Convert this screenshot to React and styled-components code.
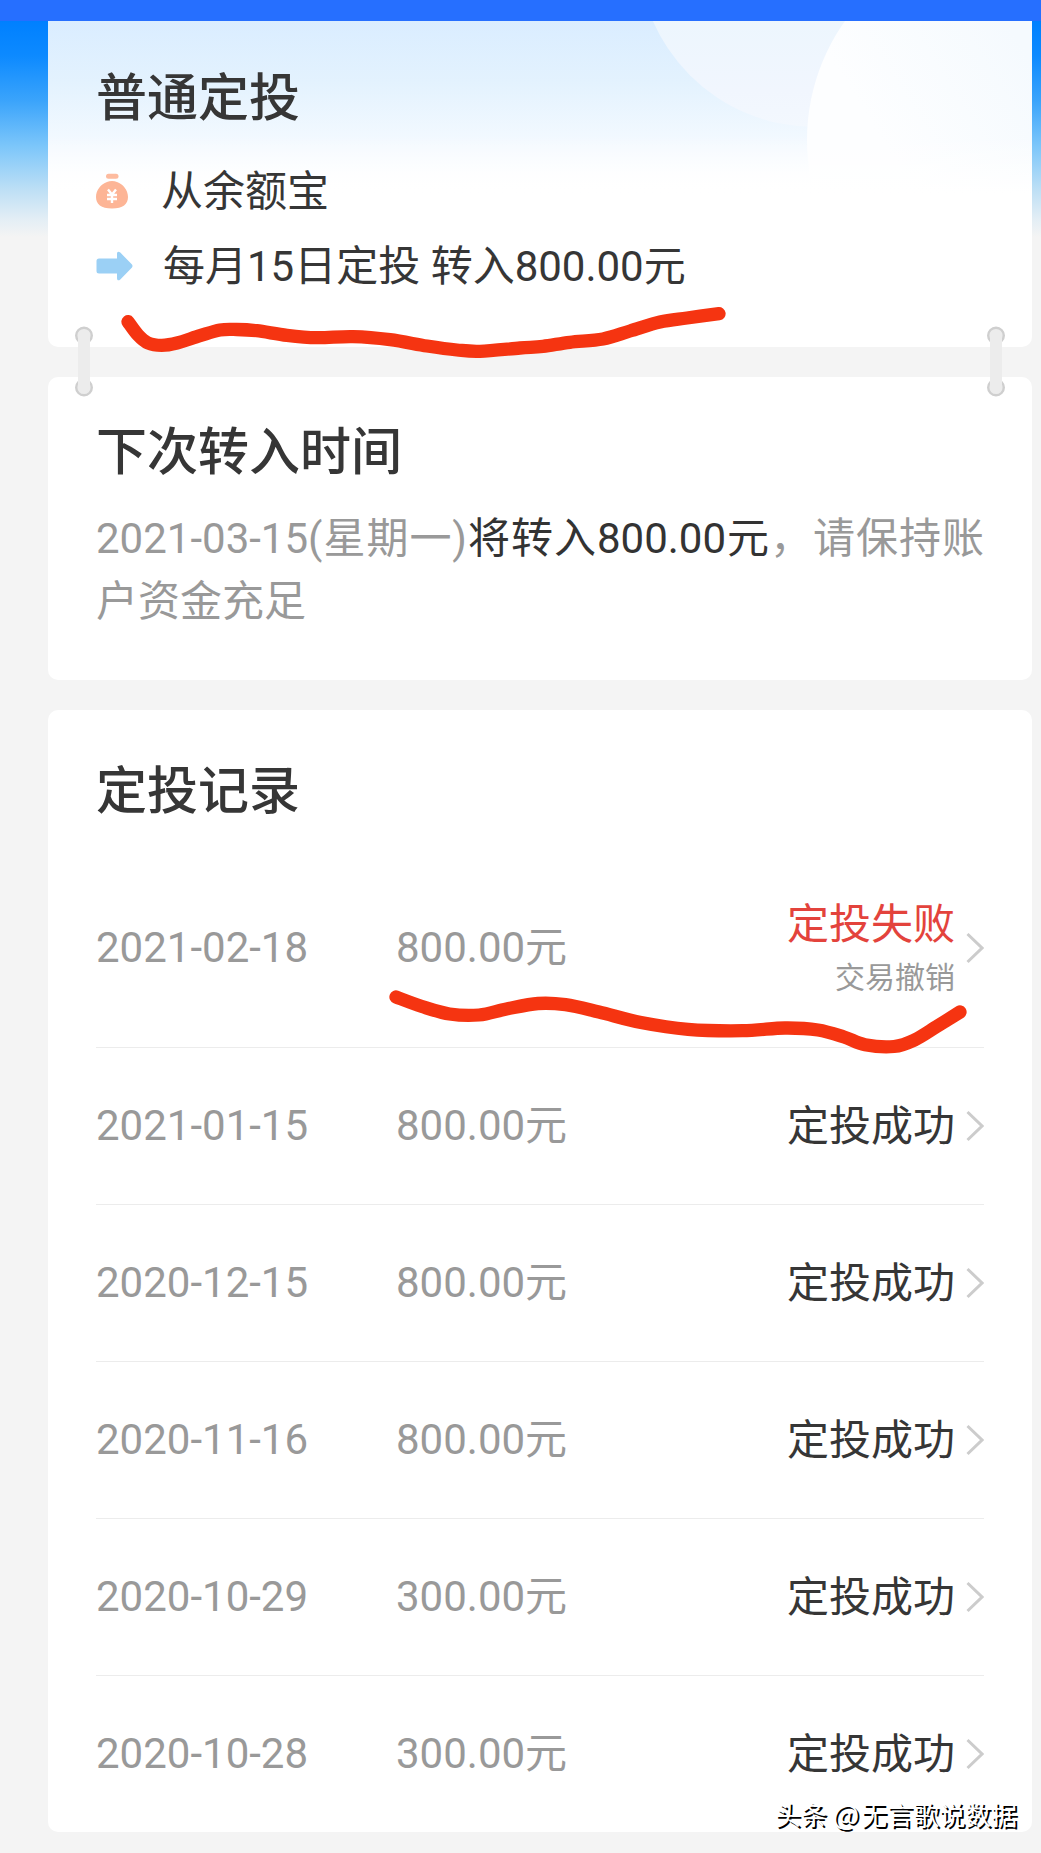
import React from "react";
import styled, { createGlobalStyle } from "styled-components";

const GlobalStyle = createGlobalStyle`
  * { box-sizing: border-box; }
  body {
    margin: 0;
    background: #f4f4f4;
    font-family: Roboto, "Noto Sans CJK SC", sans-serif;
    color: #363636;
  }
`;

const Page = styled.main`
  position: relative;
  width: 1041px;
  height: 1853px;
  overflow: hidden;
  background: #f4f4f4;
`;

const TopBar = styled.header`
  height: 21px;
  background: #266fff;
`;

const Content = styled.div`
  display: flex;
  flex-direction: column;
  gap: 30px;
  padding: 0 9px 0 48px;
  background: linear-gradient(
      180deg,
      #0080ff 0,
      #0d8aff 35px,
      #3ba4fb 80px,
      #7cc6fa 125px,
      #bfe0f5 170px,
      #e3eef5 198px,
      #f4f4f4 216px
    )
    no-repeat;
`;

const Card = styled.section`
  position: relative;
  height: ${(p) => p.$height}px;
  padding: ${(p) => p.$top}px 48px 0;
  border-radius: ${(p) => (p.$flatTop ? "0 0 10px 10px" : "10px")};
  background: #ffffff;
`;

const Backdrop = styled.svg`
  position: absolute;
  left: 0;
  top: 0;
`;

const Title = styled.h2`
  position: relative;
  margin: 0;
  font-size: 51px;
  line-height: 60px;
  font-weight: 500;
`;

const InfoRow = styled.div`
  position: relative;
  display: flex;
  align-items: center;
  height: 60px;
  margin-top: ${(p) => p.$gap}px;
  font-size: 42px;
  line-height: 58px;
  white-space: pre;

  svg {
    flex: none;
    margin-right: ${(p) => p.$space}px;
  }

  span {
    padding-top: 2px;
  }
`;

const Notice = styled.p`
  margin: 24px 0 0;
  font-size: 42px;
  line-height: 63px;
  text-align: justify;
  color: #999999;

  b {
    font-weight: 400;
    color: #333333;
  }
`;

const Links = styled.svg`
  position: absolute;
  left: 0;
  top: 300px;
`;

const Records = styled.ul`
  margin: 26px 0 0;
  padding: 0;
  list-style: none;
`;

const Record = styled.li`
  display: grid;
  grid-template-columns: 300px 1fr auto 18px;
  column-gap: 0;
  align-items: center;
  height: ${(p) => (p.$tall ? 200 : 157)}px;
  border-bottom: 1px solid #ececec;
  font-size: 42px;
  line-height: 56px;
  color: #999999;

  &:last-child {
    border-bottom-color: transparent;
  }

  > svg {
    display: block;
  }
`;

const Status = styled.div`
  display: flex;
  flex-direction: column;
  align-items: flex-end;
  margin-right: 11px;
  padding-top: 2px;
  color: ${(p) => (p.$failed ? "#e3433c" : "#363636")};
`;

const Reason = styled.small`
  font-size: 30px;
  line-height: 44px;
  margin-top: 3px;
  color: #999999;
`;

const Marks = styled.svg`
  position: absolute;
  left: 0;
  top: 0;
  pointer-events: none;
`;

const Watermark = styled.div`
  position: absolute;
  right: 24px;
  bottom: 20px;
  font-family: "Noto Sans CJK SC", sans-serif;
  font-size: 26px;
  line-height: 38px;
  color: #ffffff;
  text-shadow: 2px 2px 0 #000000;
  white-space: nowrap;
`;

const AtSign = styled.span`
  font-size: 28px;
  line-height: 1;
  letter-spacing: 2px;
`;

const records = [
  { date: "2021-02-18", amount: "800.00元", status: "定投失败", reason: "交易撤销" },
  { date: "2021-01-15", amount: "800.00元", status: "定投成功" },
  { date: "2020-12-15", amount: "800.00元", status: "定投成功" },
  { date: "2020-11-16", amount: "800.00元", status: "定投成功" },
  { date: "2020-10-29", amount: "300.00元", status: "定投成功" },
  { date: "2020-10-28", amount: "300.00元", status: "定投成功" },
];

const strokes = [
  [[128, 321.7], [138, 335], [148, 343], [161.7, 345.3], [177, 343], [200, 335.7], [220, 330], [236.7, 329.5], [256.7, 330.7], [287, 335.3], [316.7, 337.7], [353, 336.7], [390, 339.7], [427, 346], [457, 350], [480, 351.3], [520, 348], [543, 346.3], [570, 342.3], [603, 339], [630, 331], [660, 322], [687, 318], [719, 313.7]],
  [[396, 997], [422, 1006.5], [449.5, 1014], [479, 1015], [506.5, 1009], [538, 1003.5], [565.5, 1004.7], [599, 1012], [641, 1022.5], [688, 1029.3], [742.5, 1030.7], [785, 1028], [818, 1030], [844, 1037], [865, 1044.7], [894, 1046.5], [915, 1039.7], [936.5, 1026.7], [960, 1012]],
];

function smooth(points) {
  let d = `M${points[0].join(" ")}`;
  for (let i = 0; i < points.length - 1; i += 1) {
    const a = points[i - 1] || points[i];
    const b = points[i];
    const c = points[i + 1];
    const e = points[i + 2] || c;
    d += `C${b[0] + (c[0] - a[0]) / 6} ${b[1] + (c[1] - a[1]) / 6} ${c[0] - (e[0] - b[0]) / 6} ${c[1] - (e[1] - b[1]) / 6} ${c[0]} ${c[1]}`;
  }
  return d;
}

function CardBackdrop() {
  return (
    <Backdrop width="984" height="172" viewBox="0 0 984 172">
      <defs>
        <linearGradient id="sky" x1="0" y1="0" x2="0" y2="1">
          <stop offset="0" stopColor="#daedff" />
          <stop offset="0.35" stopColor="#e3f2fe" />
          <stop offset="0.75" stopColor="#f5faff" />
          <stop offset="1" stopColor="#ffffff" />
        </linearGradient>
        <linearGradient id="bubble" x1="0" y1="0" x2="0" y2="1">
          <stop offset="0.62" stopColor="#ebf6fd" />
          <stop offset="0.9" stopColor="#f1f6fe" />
          <stop offset="1" stopColor="#f3f8fe" />
        </linearGradient>
        <linearGradient id="glow" gradientUnits="userSpaceOnUse" x1="840" y1="130" x2="984" y2="40">
          <stop offset="0" stopColor="#fdfeff" />
          <stop offset="1" stopColor="#f5fafe" />
        </linearGradient>
        <linearGradient id="fade" x1="0" y1="0" x2="0" y2="1">
          <stop offset="0" stopColor="#ffffff" stopOpacity="0" />
          <stop offset="1" stopColor="#ffffff" />
        </linearGradient>
      </defs>
      <rect width="984" height="172" fill="url(#sky)" />
      <circle cx="767" cy="-71" r="177" fill="url(#bubble)" />
      <circle cx="964" cy="119" r="205" fill="url(#glow)" />
      <rect y="115" width="984" height="57" fill="url(#fade)" />
    </Backdrop>
  );
}

function MoneyBag() {
  return (
    <svg width="32" height="36" viewBox="0 0 32 36">
      <rect x="10" y="0.8" width="12.5" height="5" rx="2.5" fill="#fdbb9f" />
      <path d="M11 9C14 7.5 18 7.5 21 9C27 11 32 17 32 24C32 31 27 35.5 16 35.5S0 31 0 24C0 17 5 11 11 9Z" fill="#fdb596" />
      <path d="M12 16.5L16 21.5L20 16.5M16 21.5V30M11 22H21M11 26H21" fill="none" stroke="#fff" strokeWidth="2.4" />
    </svg>
  );
}

function Arrow() {
  return (
    <svg width="37" height="30" viewBox="0 0 37 30">
      <path d="M3 7.5H21V3C21 0.5 22.5 0 24.3 1.6L36 13.5Q37 15 36 16.5L24.3 28.4C22.5 30 21 29.5 21 27V22.5H3Q0.5 22.5 0.5 20V10Q0.5 7.5 3 7.5Z" fill="#9bd0f5" />
    </svg>
  );
}

function Chevron() {
  return (
    <svg width="18" height="32" viewBox="0 0 18 32">
      <path d="M1.5 2L16 16L1.5 30" fill="none" stroke="#cccccc" strokeWidth="3" />
    </svg>
  );
}

function CardLinks() {
  return (
    <Links width="1041" height="120" viewBox="0 300 1041 120">
      {[84, 996].map((x) => (
        <g key={x}>
          <circle cx={x} cy="335.5" r="7.8" fill="#ececec" stroke="#cfcfcf" strokeWidth="2.4" />
          <circle cx={x} cy="387.5" r="7.8" fill="#ececec" stroke="#cfcfcf" strokeWidth="2.4" />
          <rect x={x - 6} y="330" width="12" height="63" rx="6" fill="#ececec" />
        </g>
      ))}
    </Links>
  );
}

export default function App() {
  return (
    <Page>
      <GlobalStyle />
      <TopBar />
      <Content>
        <Card $height={326} $top={48} $flatTop>
          <CardBackdrop />
          <Title>普通定投</Title>
          <InfoRow $gap={32} $space={33}>
            <MoneyBag />
            <span>从余额宝</span>
          </InfoRow>
          <InfoRow $gap={15} $space={30}>
            <Arrow />
            <span>每月15日定投 转入800.00元</span>
          </InfoRow>
        </Card>
        <Card $height={303} $top={46}>
          <Title>下次转入时间</Title>
          <Notice>
            2021-03-15(星期一)<b>将转入800.00元</b>，请保持账户资金充足
          </Notice>
        </Card>
        <Card $height={1122} $top={52}>
          <Title>定投记录</Title>
          <Records>
            {records.map((r) => (
              <Record key={r.date} $tall={Boolean(r.reason)}>
                <span>{r.date}</span>
                <span>{r.amount}</span>
                <Status $failed={Boolean(r.reason)}>
                  {r.status}
                  {r.reason && <Reason>{r.reason}</Reason>}
                </Status>
                <Chevron />
              </Record>
            ))}
          </Records>
        </Card>
      </Content>
      <CardLinks />
      <Marks width="1041" height="1853" viewBox="0 0 1041 1853">
        {strokes.map((points) => (
          <path key={points[0][0]} d={smooth(points)} fill="none" stroke="#f53411" strokeWidth="13.3" strokeLinecap="round" strokeLinejoin="round" />
        ))}
      </Marks>
      <Watermark>
        头条 <AtSign>@</AtSign>无言歌说数据
      </Watermark>
    </Page>
  );
}
